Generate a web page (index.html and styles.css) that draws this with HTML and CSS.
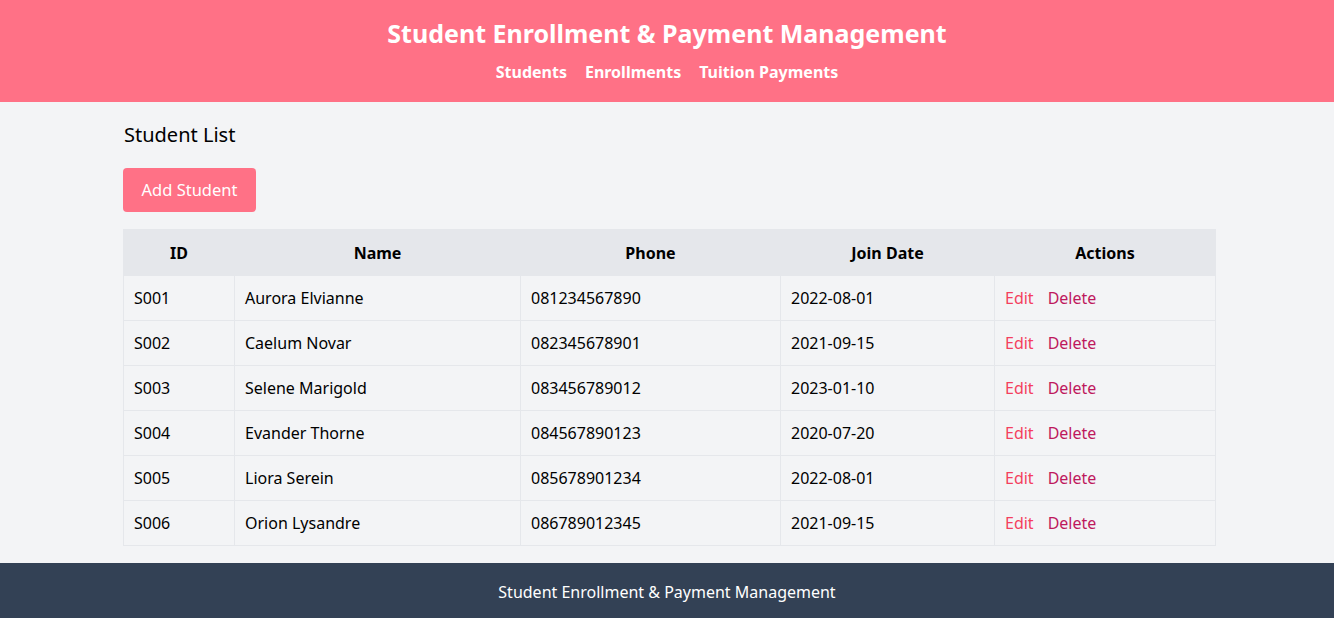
FILE: index.html
```html
<!DOCTYPE html>
<html lang="en">
<head>
<meta charset="utf-8">
<title>Student Enrollment & Payment Management</title>
<link rel="stylesheet" href="styles.css">
</head>
<body>
<header class="site-header">
  <h1 class="site-title">Student Enrollment &amp; Payment Management</h1>
  <nav class="site-nav">
    <a href="#">Students</a>
    <a href="#">Enrollments</a>
    <a href="#">Tuition Payments</a>
  </nav>
</header>
<main class="container">
  <h2 class="page-title">Student List</h2>
  <button class="btn-primary">Add Student</button>
  <table class="data-table">
    <colgroup>
      <col class="c-id"><col class="c-name"><col class="c-phone"><col class="c-date"><col class="c-actions">
    </colgroup>
    <thead>
      <tr><th>ID</th><th>Name</th><th>Phone</th><th>Join Date</th><th>Actions</th></tr>
    </thead>
    <tbody>
      <tr><td>S001</td><td>Aurora Elvianne</td><td>081234567890</td><td>2022-08-01</td><td><a class="act-edit" href="#">Edit</a><a class="act-delete" href="#">Delete</a></td></tr>
      <tr><td>S002</td><td>Caelum Novar</td><td>082345678901</td><td>2021-09-15</td><td><a class="act-edit" href="#">Edit</a><a class="act-delete" href="#">Delete</a></td></tr>
      <tr><td>S003</td><td>Selene Marigold</td><td>083456789012</td><td>2023-01-10</td><td><a class="act-edit" href="#">Edit</a><a class="act-delete" href="#">Delete</a></td></tr>
      <tr><td>S004</td><td>Evander Thorne</td><td>084567890123</td><td>2020-07-20</td><td><a class="act-edit" href="#">Edit</a><a class="act-delete" href="#">Delete</a></td></tr>
      <tr><td>S005</td><td>Liora Serein</td><td>085678901234</td><td>2022-08-01</td><td><a class="act-edit" href="#">Edit</a><a class="act-delete" href="#">Delete</a></td></tr>
      <tr><td>S006</td><td>Orion Lysandre</td><td>086789012345</td><td>2021-09-15</td><td><a class="act-edit" href="#">Edit</a><a class="act-delete" href="#">Delete</a></td></tr>
    </tbody>
  </table>
</main>
<footer class="site-footer">Student Enrollment &amp; Payment Management</footer>
</body>
</html>
```
FILE: styles.css
```css
* { box-sizing: border-box; }
html, body { margin: 0; padding: 0; }
body {
  font-family: "Noto Sans", "Open Sans", sans-serif;
  font-size: 16px;
  line-height: 24px;
  background: #f3f4f6;
  color: #000;
}
.site-header {
  background: #ff7186;
  color: #fff;
  text-align: center;
  height: 102px;
  padding-top: 16px;
}
.site-title {
  margin: 0;
  font-size: 25px;
  line-height: 34px;
  font-weight: 700;
}
.site-nav {
  display: flex;
  justify-content: center;
  gap: 18px;
  margin-top: 8px;
}
.site-nav a {
  color: #fff;
  text-decoration: none;
  font-weight: 700;
  font-size: 16px;
  line-height: 28px;
}
.container {
  width: 1096px;
  margin: 0 auto;
  padding: 18px 0 17px 4px;
}
.page-title {
  margin: 0 0 18px 1px;
  font-size: 20px;
  line-height: 30px;
  font-weight: 400;
}
.btn-primary {
  display: block;
  background: #ff7186;
  color: #fff;
  border: none;
  border-radius: 4px;
  font-family: inherit;
  font-size: 16.5px;
  line-height: 24px;
  padding: 10px 0;
  text-align: center;
  width: 133px;
  height: 44px;
  margin-bottom: 17px;
}
.data-table {
  width: 1092px;
  border-collapse: collapse;
  table-layout: fixed;
}
.c-id { width: 111px; }
.c-name { width: 286px; }
.c-phone { width: 260px; }
.c-date { width: 214px; }
.c-actions { width: 221px; }
.data-table th {
  background: #e5e7eb;
  font-weight: 700;
  height: 46px;
  padding: 0 10px;
  border: 1px solid #e5e7eb;
  text-align: center;
}
.data-table td {
  height: 45px;
  padding: 0 10px;
  border: 1px solid #e5e7eb;
}
.act-edit, .act-delete { text-decoration: none; }
.act-edit { color: #f43f5e; margin-right: 14px; }
.act-delete { color: #be185d; }
.site-footer {
  background: #334155;
  color: #fff;
  text-align: center;
  height: 55px;
  line-height: 58px;
  font-size: 16px;
}
```
